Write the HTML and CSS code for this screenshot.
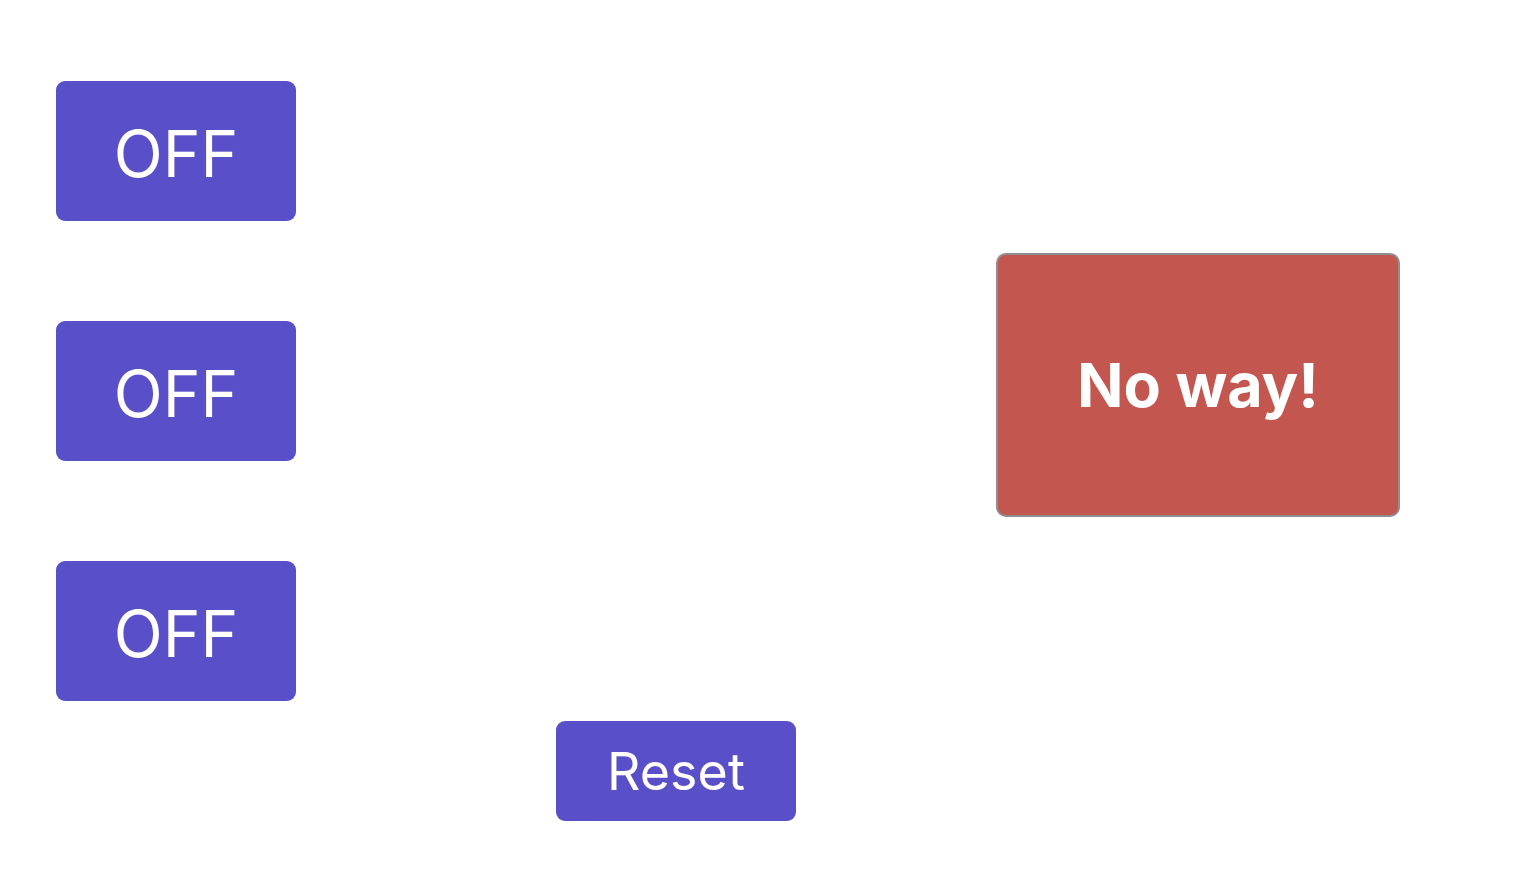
FILE: index.html
```html
<!DOCTYPE html>
<html>
<head>
<meta charset="utf-8">
<link rel="stylesheet" href="styles.css">
</head>
<body>
<main class="page">
  <div class="top">
    <div class="toggles">
      <button class="btn toggle">OFF</button>
      <button class="btn toggle">OFF</button>
      <button class="btn toggle">OFF</button>
    </div>
    <button class="noway">No way!</button>
  </div>
  <button class="btn reset">Reset</button>
</main>
</body>
</html>
```
FILE: styles.css
```css
html, body {
  margin: 0;
  padding: 0;
  background: #ffffff;
}
.page {
  padding: 81px 0 0 56px;
  font-family: Inter, "Noto Sans", sans-serif;
}
.top {
  display: flex;
  align-items: flex-start;
}
.toggles {
  display: flex;
  flex-direction: column;
  gap: 100px;
}
.btn {
  background: #584fc9;
  color: #ffffff;
  border: none;
  border-radius: 9px;
  font-family: Inter, "Noto Sans", sans-serif;
  font-weight: 400;
  padding: 0;
  margin: 0;
  display: flex;
  align-items: center;
  justify-content: center;
}
.toggle {
  width: 240px;
  height: 140px;
  font-size: 64px;
  padding-top: 4px;
  box-sizing: border-box;
}
.noway {
  margin: 172px 0 0 700px;
  width: 404px;
  height: 264px;
  box-sizing: border-box;
  background: #c45650;
  border: 2px solid #8e8e8e;
  border-radius: 10px;
  color: #ffffff;
  font-family: Inter, "Noto Sans", sans-serif;
  font-weight: 700;
  font-size: 61px;
  padding: 0;
}
.reset {
  margin: 20px 0 0 500px;
  width: 240px;
  height: 100px;
  font-size: 52px;
}
```
